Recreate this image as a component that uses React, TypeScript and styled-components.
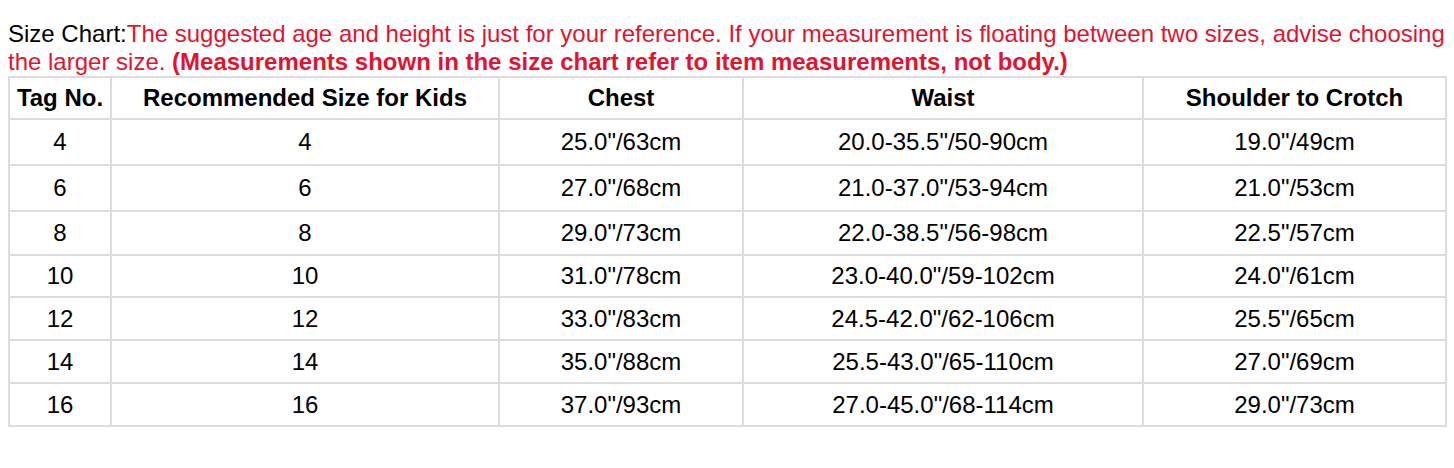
import React from "react";
import styled, { createGlobalStyle } from "styled-components";

const GlobalStyle = createGlobalStyle`
  html, body {
    margin: 0;
    padding: 0;
    background: #fff;
  }
  body {
    font-family: "Liberation Sans", Arial, sans-serif;
    color: #000;
  }
`;

const Page = styled.div`
  padding: 20px 0 0 8px;
  width: 1454px;
  box-sizing: border-box;
`;

const Note = styled.p`
  margin: 0;
  font-size: 24px;
  line-height: 28px;
  color: #000;
`;

const Red = styled.span<{ $bold?: boolean }>`
  color: #e3132f;
  font-weight: ${p => (p.$bold ? "bold" : "normal")};
`;

const Table = styled.table`
  border-collapse: collapse;
  table-layout: fixed;
  width: 1437px;
  margin-top: 0;
  font-size: 24px;
`;

const Cell = styled.td`
  border: 2px solid #dcdcdc;
  text-align: center;
  vertical-align: middle;
  padding: 0;
`;

const HeadCell = styled(Cell).attrs({ as: "th" })`
  font-weight: bold;
`;

const Row = styled.tr<{ $h: number }>`
  height: ${p => p.$h}px;
`;

const columns = [
  { title: "Tag No.", width: 102 },
  { title: "Recommended Size for Kids", width: 388 },
  { title: "Chest", width: 244 },
  { title: "Waist", width: 400 },
  { title: "Shoulder to Crotch", width: 303 },
];

const rows = [
  ["4", "4", '25.0"/63cm', '20.0-35.5"/50-90cm', '19.0"/49cm'],
  ["6", "6", '27.0"/68cm', '21.0-37.0"/53-94cm', '21.0"/53cm'],
  ["8", "8", '29.0"/73cm', '22.0-38.5"/56-98cm', '22.5"/57cm'],
  ["10", "10", '31.0"/78cm', '23.0-40.0"/59-102cm', '24.0"/61cm'],
  ["12", "12", '33.0"/83cm', '24.5-42.0"/62-106cm', '25.5"/65cm'],
  ["14", "14", '35.0"/88cm', '25.5-43.0"/65-110cm', '27.0"/69cm'],
  ["16", "16", '37.0"/93cm', '27.0-45.0"/68-114cm', '29.0"/73cm'],
];

const rowHeights = [46, 46, 44, 42, 43, 43, 43];

export default function App() {
  return (
    <>
      <GlobalStyle />
      <Page>
        <Note>
          Size Chart:
          <Red>
            The suggested age and height is just for your reference. If your measurement is floating between two sizes, advise choosing the larger size.{" "}
          </Red>
          <Red $bold>(Measurements shown in the size chart refer to item measurements, not body.)</Red>
        </Note>
        <Table>
          <colgroup>
            {columns.map(c => (
              <col key={c.title} style={{ width: c.width }} />
            ))}
          </colgroup>
          <thead>
            <Row $h={42}>
              {columns.map(c => (
                <HeadCell key={c.title}>{c.title}</HeadCell>
              ))}
            </Row>
          </thead>
          <tbody>
            {rows.map((r, i) => (
              <Row key={r[0]} $h={rowHeights[i]}>
                {r.map((v, j) => (
                  <Cell key={j}>{v}</Cell>
                ))}
              </Row>
            ))}
          </tbody>
        </Table>
      </Page>
    </>
  );
}
